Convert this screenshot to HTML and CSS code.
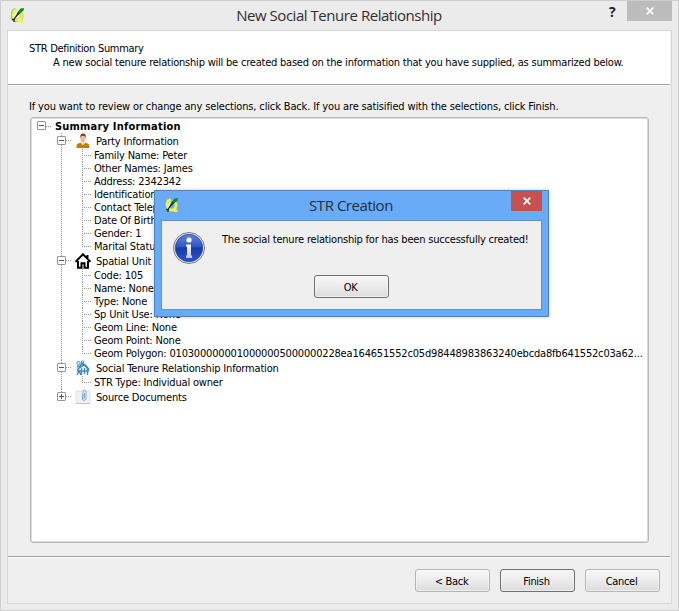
FILE: index.html
```html
<!DOCTYPE html>
<html lang="en">
<head>
<meta charset="utf-8">
<title>New Social Tenure Relationship</title>
<link rel="stylesheet" href="styles.css">
</head>
<body>
<svg class="defs" width="0" height="0" aria-hidden="true">
  <defs>
    <linearGradient id="blue" x1="0" y1="0" x2="0" y2="1"><stop offset="0" stop-color="#5c86dd"/><stop offset=".45" stop-color="#3058c5"/><stop offset=".5" stop-color="#1739ab"/><stop offset="1" stop-color="#2756da"/></linearGradient>
    <linearGradient id="silver" x1="0" y1="0" x2="0" y2="1"><stop offset="0" stop-color="#fff"/><stop offset="1" stop-color="#c4c4c8"/></linearGradient>
    <symbol id="quill" viewBox="0 0 14 16">
      <path d="M5 2.500 2.500 4 1.200 7.500l.8 4L5 13.500l2-.5M10 6l1 2-.5 3-2 1.500" fill="none" stroke="#a9ad80" stroke-width="3.400"/>
      <path d="M6 2.500 3 4 2 7.500l.8 4L5.500 13H8l2 .8h2.500M10 5.500l1.200 2.500-.7 3L8 12.500" fill="none" stroke="#e8f35c" stroke-width="2.600"/>
      <path d="M5.500 5 4 8v2" fill="none" stroke="#fbfdd4" stroke-width="1.500"/>
      <path d="M13 1 9.500 1.500 6 6 5.500 9 8 7.500 12.500 3.500z" fill="#108a24"/>
      <path d="M8 5.500 5 9.500 3 12.500M1 12.500h3M3 12v3" stroke="#123514" stroke-width="1.300" fill="none"/>
    </symbol>
  </defs>
</svg>
<div class="window">
  <header class="titlebar">
    <svg class="app-icon" width="14" height="16"><use href="#quill"/></svg>
    <h1>New Social Tenure Relationship</h1>
    <span class="help">?</span>
    <span class="close"><svg width="8" height="8" viewBox="0 0 8 8"><path d="M.7.7l6.600 6.600M7.300.7.7 7.300"/></svg></span>
  </header>
  <main class="client">
    <section class="banner">
      <p>STR Definition Summary</p>
      <p class="sub">A new social tenure relationship will be created based on the information that you have supplied, as summarized below.</p>
    </section>
    <p class="hint">If you want to review or change any selections, click Back. If you are satisified with the selections, click Finish.</p>
    <div class="tree">
      <div class="root"><i class="box"></i><i class="dots"></i><b>Summary Information</b></div>
      <div class="group">
        <div class="node"><i class="box"></i><i class="dots"></i>
          <svg class="icon" width="16" height="16" viewBox="0 0 16 16"><path d="M1.500 15v-2q0-2.500 4-3.200h4.800q4 .8 4 3.200v2z" fill="#c27c08"/><path d="M6 9.500h4L9.500 11 8 12 6.500 11z" fill="#f5e5cf"/><ellipse cx="8" cy="5.500" rx="2.600" ry="4" fill="#e9bea0"/><path d="M5.200 5q-.4-4.400 2.900-4.400T10.800 5L9.700 3H6.500z" fill="#8b3f22"/></svg>
          <span>Party Information</span></div>
        <ul><li>Family Name: Peter</li><li>Other Names: James</li><li>Address: 2342342</li><li>Identification</li><li>Contact Telephone</li><li>Date Of Birth</li><li>Gender: 1</li><li>Marital Status</li></ul>
      </div>
      <div class="group">
        <div class="node"><i class="box"></i><i class="dots"></i>
          <svg class="icon" width="16" height="16" viewBox="0 0 16 16"><path d="M.5 8.800 8 1.300l7.500 7.500M3 8v6.800h3.500v-4.500h3v4.500H13V8M12.500 2v4" fill="none" stroke="#000" stroke-width="2"/></svg>
          <span>Spatial Unit Information</span></div>
        <ul><li>Code: 105</li><li>Name: None</li><li>Type: None</li><li>Sp Unit Use: None</li><li>Geom Line: None</li><li>Geom Point: None</li><li>Geom Polygon: 0103000000010000005000000228ea164651552c05d98448983863240ebcda8fb641552c03a62...</li></ul>
      </div>
      <div class="group">
        <div class="node"><i class="box"></i><i class="dots"></i>
          <svg class="icon" width="16" height="16" viewBox="0 0 16 16"><g fill="none" stroke="#4289c8"><circle cx="3.500" cy="3" r="1.600"/><circle cx="7.500" cy="2" r="1.200"/><path d="M2 6.500h3l2-3 3 1.500 4 4.500" stroke-width="1.800"/><path d="M2 9.500 9 5l5 5M3.500 9v2M6.500 8v7M9.500 8v6M12.500 9v6M2 11h12M2 15l2-4 2 4" stroke-width="1.400"/></g></svg>
          <span>Social Tenure Relationship Information</span></div>
        <ul><li>STR Type: Individual owner</li></ul>
      </div>
      <div class="group last">
        <div class="node"><i class="box plus"></i><i class="dots"></i>
          <svg class="icon" width="16" height="16" viewBox="0 0 16 16"><path d="M1 2h14v12.500H1z" fill="#edf1f4" stroke="#dfe4e8"/><path d="M1 14.500h14" stroke="#bdc6cc"/><path d="M7.500 5v5q0 1.500 1.300 1.500T11 10V3q0-2-1.500-2T8 3v5.500q0 1 .8 1T9.500 8V4" fill="none" stroke="#7aa2bf" stroke-width=".9"/></svg>
          <span>Source Documents</span></div>
      </div>
    </div>
    <footer class="buttons"><button>&lt; Back</button><button class="default">Finish</button><button>Cancel</button></footer>
  </main>
</div>
<div class="dialog">
  <header class="dialog-title">
    <svg class="app-icon" width="14" height="16"><use href="#quill"/></svg>
    <h2>STR Creation</h2>
    <span class="close red"><svg width="8" height="8" viewBox="0 0 8 8"><path d="M.7.7l6.600 6.600M7.300.7.7 7.300"/></svg></span>
  </header>
  <div class="dialog-body">
    <svg class="info" width="34" height="34" viewBox="0 0 34 34"><circle cx="17" cy="17" r="15.500" fill="#eee" stroke="#77797e"/><circle cx="17" cy="17" r="13.700" fill="url(#blue)" stroke="#273f91" stroke-width=".8"/><circle cx="17" cy="9" r="2.600" fill="#fff"/><path d="M14 13.500h5v11h1V27h-6v-2.500h1v-9h-1z" fill="url(#silver)"/></svg>
    <p class="message">The social tenure relationship for has been successfully created!</p>
    <button class="default ok">OK</button>
  </div>
</div>
</body>
</html>
```
FILE: styles.css
```css
* { box-sizing: border-box; margin: 0; padding: 0; }
body { width: 679px; height: 611px; overflow: hidden; font: 11px/13px "DejaVu Sans Condensed", "DejaVu Sans", sans-serif; font-stretch: condensed; letter-spacing: -.3px; color: #000; white-space: nowrap; }
.defs { position: absolute; }
.window { width: 679px; height: 611px; border: 1px solid #cecece; background: #ebebeb; padding: 0 6px 6px; display: flex; flex-direction: column; }
.titlebar { height: 29px; flex: none; display: grid; grid-template-columns: 120px 1fr 66px 8px 46px; margin-right: -1px; }
.titlebar .app-icon { margin: 6px 0 0 4px; }
h1, h2 { font: 15px/28px "Open Sans", "Noto Sans", sans-serif; letter-spacing: -.46px; color: #303030; text-align: center; }
.titlebar h1 { padding-right: 2px; }
.help { grid-column: 3; font: bold 14px/22px "Open Sans", sans-serif; padding-left: 56px; color: #222; }
.close { grid-column: 5; height: 20px; background: #bcbcbc; display: flex; align-items: center; justify-content: center; margin-right: 1px; }
.close path { stroke: #fff; stroke-width: 1.7; fill: none; }
.client { flex: 1; border: 1px solid #d7d7d7; background: #efefef; display: flex; flex-direction: column; }
.banner { height: 55px; flex: none; background: #fff; border-bottom: 1px solid #fff; padding: 11px 0 0 21px; margin-right: 1px; box-shadow: inset 0 -1px #a0a0a0; }
.sub { padding: 1px 0 0 24px; letter-spacing: -.215px; }
.hint { padding: 14px 0 0 21px; height: 31px; flex: none; letter-spacing: -.145px; }
.tree { width: 619px; height: 426px; flex: none; margin-left: 22px; padding: 1px; border: 1px solid #b9b9b9; border-radius: 3px; background: #fff; box-shadow: inset 0 0 0 1px #dadada; overflow: hidden; letter-spacing: -.18px; }
.root, .node { display: flex; align-items: center; }
.root { height: 14px; padding-left: 5px; }
.root b { margin-left: 3px; letter-spacing: .2px; }
.box { width: 9px; height: 9px; flex: none; border: 1px solid #969696; border-radius: 1px; background: linear-gradient(#555, #555) center/5px 1px no-repeat #fff; z-index: 1; }
.root .box { margin-top: -1px; }
.plus { background: linear-gradient(#555, #555) center/5px 1px no-repeat, linear-gradient(#555, #555) center/1px 5px no-repeat #fff; }
.dots { width: 6px; height: 1px; background: repeating-linear-gradient(90deg, #999 0 1px, transparent 1px 2px); flex: none; }
.group { background: repeating-linear-gradient(#999 0 1px, transparent 1px 2px) 29px 0/1px 100% no-repeat; }
.group.last { background-size: 1px 8px; }
.node { height: 16px; padding-left: 25px; }
.node .box, .node .dots { margin-top: -2px; }
.icon { margin-left: 3px; flex: none; }
.node span { margin-left: 5px; }
ul { list-style: none; margin-left: 50px; }
li { height: 13px; padding-left: 12px; background: repeating-linear-gradient(#999 0 1px, transparent 1px 2px) 0 0/1px 100% no-repeat, repeating-linear-gradient(90deg, #999 0 1px, transparent 1px 2px) 0 6px/10px 1px no-repeat; }
li:last-child { background-size: 1px 7px, 10px 1px; }
.buttons { margin: 13px 1px 0 0; flex: 1; border-top: 1px solid #a0a0a0; box-shadow: inset 0 1px #fff; display: flex; justify-content: flex-end; gap: 10px; padding: 12px 10px 0 0; }
button { width: 75px; height: 23px; border: 1px solid #b5b5b5; border-radius: 3px; background: linear-gradient(#f7f7f7, #ececec 50%, #dcdcdc); box-shadow: inset 0 0 0 1px #f8f8f8aa; font: inherit; font-stretch: condensed; letter-spacing: inherit; color: #000; padding-right: 2px; padding-top: 1px; }
button.default { border-color: #707070; }
.dialog { position: absolute; left: 154px; top: 190px; width: 395px; height: 127px; border: 1px solid #4c82bd; background: #6aabf7; box-shadow: 0 0 4px #0003; padding: 0 6px 6px; display: flex; flex-direction: column; }
.dialog-title { height: 29px; display: grid; grid-template-columns: 32px 1fr 31px; }
.dialog-title .app-icon { margin: 6px 0 0 4px; }
.dialog h2 { line-height: 29px; color: #1d3040; padding-right: 2px; }
.close.red { grid-column: 3; background: #c75050; margin: 0; }
.dialog-body { height: 90px; border: 1px solid #5a93d0; background: #efefef; display: grid; grid-template-columns: 60px 1fr; grid-template-rows: 54px 24px; }
.info { margin: 10px 0 0 10px; }
.message { padding-top: 12px; letter-spacing: -.2px; }
.ok { grid-column: 1 / 3; margin-left: 152px; }
```
